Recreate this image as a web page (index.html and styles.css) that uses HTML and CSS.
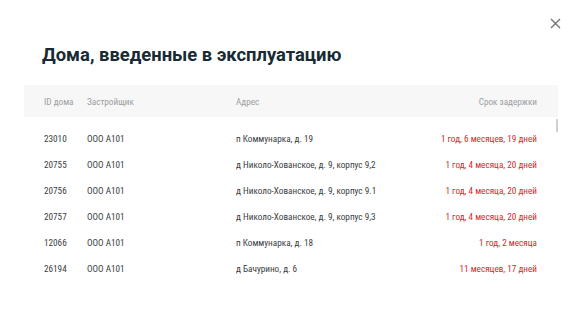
FILE: index.html
```html
<!DOCTYPE html>
<html lang="ru">
<head>
<meta charset="utf-8">
<link rel="stylesheet" href="styles.css">
</head>
<body>
<div class="modal">
  <div class="topbar">
    <button class="close" aria-label="Закрыть">
      <svg width="11" height="11" viewBox="0 0 11 11"><path d="M1 1L10 10M10 1L1 10" stroke="#6f7478" stroke-width="1.4" fill="none"/></svg>
    </button>
  </div>
  <h1 class="title">Дома, введенные в эксплуатацию</h1>
  <div class="table">
    <div class="thead row">
      <span>ID дома</span><span>Застройщик</span><span>Адрес</span><span class="delay">Срок задержки</span>
    </div>
    <div class="tbody">
      <div class="scroll"></div>
      <div class="row"><span>23010</span><span>ООО А101</span><span>п Коммунарка, д. 19</span><span class="delay red">1 год, 6 месяцев, 19 дней</span></div>
      <div class="row"><span>20755</span><span>ООО А101</span><span>д Николо-Хованское, д. 9, корпус 9,2</span><span class="delay red">1 год, 4 месяца, 20 дней</span></div>
      <div class="row"><span>20756</span><span>ООО А101</span><span>д Николо-Хованское, д. 9, корпус 9.1</span><span class="delay red">1 год, 4 месяца, 20 дней</span></div>
      <div class="row"><span>20757</span><span>ООО А101</span><span>д Николо-Хованское, д. 9, корпус 9,3</span><span class="delay red">1 год, 4 месяца, 20 дней</span></div>
      <div class="row"><span>12066</span><span>ООО А101</span><span>п Коммунарка, д. 18</span><span class="delay red">1 год, 2 месяца</span></div>
      <div class="row"><span>26194</span><span>ООО А101</span><span>д Бачурино, д. 6</span><span class="delay red">11 месяцев, 17 дней</span></div>
    </div>
  </div>
</div>
</body>
</html>
```
FILE: styles.css
```css
html, body {
  margin: 0;
  padding: 0;
  background: #ffffff;
}
.modal {
  width: 582px;
  height: 314px;
  box-sizing: border-box;
  padding: 0 24px 0 24px;
  font-family: Roboto, "Open Sans", sans-serif;
}
.topbar {
  display: flex;
  justify-content: flex-end;
  height: 40px;
  align-items: flex-start;
  padding-top: 18px;
  box-sizing: border-box;
}
.close {
  border: 0;
  background: none;
  padding: 0;
  margin-right: -3px;
  width: 11px;
  height: 11px;
  display: flex;
}
.title {
  margin: 2px 0 0 18px;
  font-family: Roboto, "Open Sans", sans-serif;
  font-weight: 700;
  font-size: 18.4px;
  line-height: 26px;
  color: #182a33;
}
.table {
  margin-top: 17px;
}
.row {
  display: grid;
  grid-template-columns: 43px 149px 1fr auto;
  align-items: center;
  padding: 0 21px 0 20px;
  height: 26px;
  font-family: "Roboto Condensed", Roboto, sans-serif;
  font-stretch: 75%;
  font-size: 9.2px;
  color: #383d42;
}
.thead {
  background: #f7f7f7;
  height: 32px;
  color: #9a9ea2;
}
.tbody {
  position: relative;
  padding-top: 8px;
}
.scroll {
  position: absolute;
  right: 0;
  top: 2px;
  width: 2px;
  height: 13px;
  background: #d0d0d0;
}
.delay {
  text-align: right;
}
.red {
  color: #d8262d;
}
```
